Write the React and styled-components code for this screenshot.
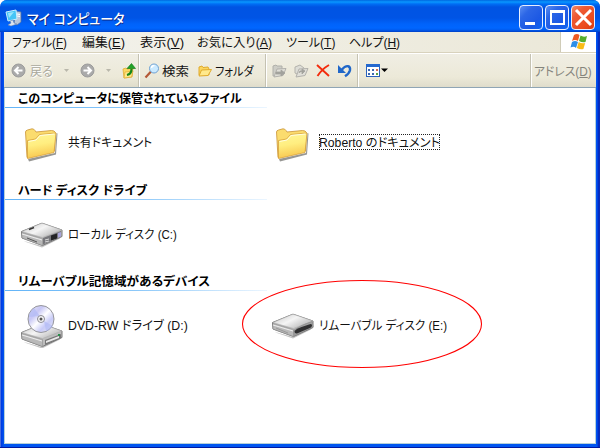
import React, { useLayoutEffect, useRef, useState } from "react";
import styled, { createGlobalStyle } from "styled-components";

const GlobalStyle = createGlobalStyle`
  * { box-sizing: border-box; }
  body { margin: 0; background: #fff; overflow: hidden; }
  svg { display: block; flex: none; }
`;

const Window = styled.div`
  width: 600px;
  height: 448px;
  display: flex;
  flex-direction: column;
  background: linear-gradient(90deg, #4a6fe0 0, #4a6fe0 1px, #0038e0 1px, #0055f0 4px, #0055f0 596px, #0050f0 597px, #0020b8 599px, #1838b0 600px);
  border-bottom: 1px solid #0018a0;
  border-radius: 7px 7px 0 0;
  padding: 0 4px 3px;
  font-family: "Liberation Sans", "Noto Sans CJK JP", sans-serif;
  font-size: 12px;
  color: #111;
`;

const TitleBar = styled.header`
  height: 32px;
  margin: 0 -4px;
  padding: 3px 5px 0;
  display: flex;
  align-items: center;
  border-radius: 7px 7px 0 0;
  background: linear-gradient(180deg, #0067e0 0, #0997ff 2px, #006ef4 4px, #0054e3 7px, #0054e5 18px, #0063fb 24px, #0066ff 28px, #005bef 30px, #003fc4 32px);
`;

const TitleText = styled.h1`
  flex: 1;
  margin: 0 0 0 4px;
  font-size: 14px;
  font-weight: 500;
  line-height: 24px;
  color: #fff;
  text-shadow: 1px 1px 0 #0a2a8a;
`;

const Controls = styled.div`
  display: flex;
  gap: 2px;
`;

const Control = styled.button`
  width: 24px;
  height: 25px;
  padding: 0;
  border: 1px solid #e8efff;
  border-radius: 4px;
  display: grid;
  place-items: center;
  background: ${(p) =>
    p.$close
      ? "linear-gradient(135deg, #f08a68 0, #ee5a34 30%, #ec4c20 70%, #d83c10 100%)"
      : "linear-gradient(135deg, #5a8ef2 0, #2c66e6 30%, #1c58e4 70%, #0c66f4 100%)"};
`;

const MenuBar = styled.nav`
  height: 21px;
  display: flex;
  background: linear-gradient(90deg, #f3f2ec, #ebe8d8);
  border-bottom: 1px solid #d8d2bd;
`;

const Menus = styled.div`
  flex: 1;
  display: flex;
  align-items: center;
  padding-left: 8px;
  border-right: 1px solid #d0ccb8;
`;

const MenuItem = styled.div`
  margin-right: ${(p) => p.$after}px;
  line-height: 18px;
`;

const Brand = styled.div`
  width: 35px;
  display: grid;
  place-items: center;
  background: #fff;
`;

const ToolBar = styled.div`
  height: 35px;
  display: flex;
  border-top: 1px solid #fff;
  border-bottom: 1px solid #8fa5b5;
  background: linear-gradient(180deg, #f0eee4, #ece9d8 70%, #dfdccb);
`;

const ToolGroup = styled.div`
  width: ${(p) => p.$width}px;
  display: flex;
  align-items: center;
  padding-left: ${(p) => p.$left}px;
  gap: ${(p) => p.$gap}px;
  border-right: ${(p) => (p.$last ? "0" : "1px solid #c5c2b2")};
  box-shadow: ${(p) => (p.$last ? "none" : "1px 0 #fff")};
  line-height: 18px;
  color: ${(p) => (p.$muted ? "#85857d" : "inherit")};
`;

const Tool = styled.div`
  display: flex;
  align-items: center;
  gap: ${(p) => p.$gap || 4}px;
  color: ${(p) => (p.$disabled ? "#aaa99f" : "inherit")};
  text-shadow: ${(p) => (p.$disabled ? "1px 1px #fff" : "none")};
`;

const Content = styled.main`
  flex: 1;
  background: #fff;
  border: 1px solid #b4d0d8;
  border-top: 0;
`;

const Section = styled.section`
  height: ${(p) => p.$height}px;
`;

const SectionTitle = styled.h2`
  height: ${(p) => p.$height}px;
  width: 262px;
  margin: 0;
  padding: 0 0 0 13px;
  display: flex;
  align-items: flex-end;
  font-size: 12px;
  font-weight: 700;
  line-height: 17px;
  color: #000;
  border-bottom: 1px solid;
  border-image: linear-gradient(90deg, #62b4f8, #8cc8f9 50%, #ecf6ff) 1;
`;

const Items = styled.div`
  display: grid;
  grid-template-columns: 251px 251px;
  padding: ${(p) => p.$top}px 0 0 15px;
`;

const Item = styled.div`
  display: flex;
  align-items: center;
  gap: 4px;
  height: 44px;
`;

const ItemName = styled.div`
  height: 16px;
  margin-bottom: ${(p) => p.$lift}px;
  display: flex;
  align-items: center;
  line-height: 18px;
  outline: ${(p) => (p.$focused ? "1px dotted #222" : "0")};
  outline-offset: -1px;
`;

const FitBox = styled.span`
  display: inline-block;
  width: ${(p) => p.$width}px;
  white-space: pre;
  vertical-align: top;
`;

const FitInner = styled.span`
  display: inline-block;
  transform-origin: 0 50%;
  font-feature-settings: "palt";
`;

const Mnemonic = styled.span`
  text-decoration: underline;
  text-underline-offset: 1px;
  text-decoration-thickness: 1px;
`;

const HighlightRing = styled.svg`
  position: absolute;
  left: 241px;
  top: 279px;
  pointer-events: none;
`;

function Fit({ width, children }) {
  const ref = useRef(null);
  const [scale, setScale] = useState(1);
  useLayoutEffect(() => {
    setScale(width / ref.current.offsetWidth);
  }, [width]);
  return (
    <FitBox $width={width}>
      <FitInner ref={ref} style={{ transform: `translateY(1px) scaleX(${scale})` }}>{children}</FitInner>
    </FitBox>
  );
}

const ComputerIcon = () => (
  <svg width="18" height="18" viewBox="0 0 18 18">
    <path d="M11 2l5 1v10l-4 3-3-2z" fill="#b9c7dc" stroke="#53719e" strokeWidth=".7" />
    <path d="M12 5l3 .5M12 7l3 .5" stroke="#fff" />
    <path d="M1 3l10-2 1 9-9 2z" fill="#45c5f6" stroke="#c9efff" />
    <path d="M3 4l6-1-5 6z" fill="#9ce6ff" />
    <path d="M5 12l3-1 1 3 3 1-6 2-3-1 3-2z" fill="#dce3ef" stroke="#6a82a8" strokeWidth=".5" />
  </svg>
);

const Flag = () => (
  <svg width="18" height="18" viewBox="0 0 18 18">
    <path d="M4 2q3-2 5.500 0L8 8q-3-2-6 0z" fill="#ee5a24" />
    <path d="M10.500 2.500q3 2 6.500 .5L15.500 9q-3 1-6.500-1z" fill="#55ae2d" />
    <path d="M2 9q3-2 6 0l-2 6q-2-2-5.500-.5z" fill="#2e8ee6" />
    <path d="M8.700 9q3 2 6.500 1l-1.800 6q-3 1-6.500-1z" fill="#f9bb16" />
  </svg>
);

const RoundArrow = ({ forward }) => (
  <svg width="15" height="15" viewBox="0 0 15 15">
    <circle cx="7.500" cy="7.500" r="6.500" fill="#aaa" stroke="#9b9b9b" />
    <path d={forward ? "M3.500 7.500h7M7.500 4l3.500 3.500L7.500 11" : "M11.500 7.500h-7M7.500 4L4 7.500 7.500 11"} fill="none" stroke="#fff" strokeWidth="2" />
  </svg>
);

const Caret = ({ dark }) => (
  <svg width="7" height="5" viewBox="0 0 7 5">
    <path d={dark ? "M0 .5h7L3.500 4z" : "M1 1h5L3.500 4z"} fill={dark ? "#000" : "#b9b7ab"} />
  </svg>
);

const UpFolder = () => (
  <svg width="14" height="16" viewBox="0 0 14 16">
    <path d="M1 6l3-1 1 1 6-1-1 9-8 1z" fill="#fbd862" stroke="#e0ac35" strokeWidth=".8" />
    <path d="M2 15l1-6 8-1-1.500 6z" fill="#ffe88c" stroke="#e0ac35" strokeWidth=".7" />
    <path d="M5 12q4.500-1 4.500-6" fill="none" stroke="#168617" strokeWidth="2.200" />
    <path d="M5 5.500L9.500 .5l4 5z" fill="#21a32a" stroke="#0b7714" strokeWidth=".6" />
  </svg>
);

const Magnifier = () => (
  <svg width="16" height="16" viewBox="0 0 16 16">
    <path d="M1.500 14.500L7 8.500" stroke="#b45937" strokeWidth="2.200" />
    <circle cx="10" cy="5.500" r="4.500" fill="#cbeaff" stroke="#6fa1d2" />
    <path d="M7.500 5q0-2.500 3-2.500" fill="none" stroke="#fff" strokeWidth="1.500" />
  </svg>
);

const OpenFolder = () => (
  <svg width="14" height="14" viewBox="0 0 14 14">
    <path d="M1 11V3l3-1 1 1.500 5-.5 1 2v6z" fill="#fbd65f" stroke="#e0aa2c" />
    <path d="M1 12l2.500-6 10-.5-3.500 6z" fill="#ffe98c" stroke="#e0aa2c" />
  </svg>
);

const SendTo = ({ copy }) => (
  <svg width="15" height="14" viewBox="0 0 15 14">
    {copy ? (
      <path d="M1 3l5-2 4 3v4l-5 3-4-2z" fill="#ddddd6" stroke="#b4b3ad" />
    ) : (
      <path d="M1 12V2l3-1 1 1h5v9z" fill="#cdcdc6" stroke="#b0b0aa" />
    )}
    <path d="M2 13l3-8 9-.5-3 7z" fill="#e0dfd8" stroke="#b2b1ac" />
    <path d={copy ? "M5 9q0-3 4-2M8 5l3 2-3 3z" : "M4 8h5V6l4 3-4 3v-2H4z"} fill="#a2a29d" stroke="#a2a29d" strokeWidth=".8" />
  </svg>
);

const DeleteIcon = () => (
  <svg width="14" height="13" viewBox="0 0 14 13">
    <path d="M1 1l12 11M13 1Q6 5 1.500 12" fill="none" stroke="#f32c0c" strokeWidth="1.900" />
  </svg>
);

const UndoIcon = () => (
  <svg width="15" height="14" viewBox="0 0 15 14">
    <path d="M4.500 6Q8 1.800 11 2.200q2.500 .5 2 4Q12.300 9.500 8 12.300" fill="none" stroke="#2067c9" strokeWidth="2.400" />
    <path d="M1 1v8h8z" fill="#2067c9" />
  </svg>
);

const ViewsIcon = () => (
  <svg width="14" height="13" viewBox="0 0 14 13">
    <rect x=".5" y=".5" width="13" height="12" fill="#fff" stroke="#2a62bb" />
    <path d="M0 0h14v3H0z" fill="#2569cf" />
    <g fill="#3b68b0">
      <path d="M2 5h2v2H2zM6 5h2v2H6zM2 9h2v2H2zM6 9h2v2H6z" />
    </g>
    <path d="M10 5h2v2h-2z" fill="#d76c4f" />
    <path d="M10 9h2v2h-2z" fill="#59a346" />
  </svg>
);

const FolderIcon = () => (
  <svg width="44" height="44" viewBox="0 0 44 44">
    <defs>
      <linearGradient id="folderFace" x1="0" y1="0" x2=".2" y2="1">
        <stop offset="0" stopColor="#fff79a" />
        <stop offset=".5" stopColor="#ffee80" />
        <stop offset="1" stopColor="#f8c850" />
      </linearGradient>
    </defs>
    <path d="M8 37l27-6 1.500-20 1 .5-1.500 21-27 7z" fill="#8c8c88" opacity=".9" />
    <path d="M5.500 10q0-1.500 2-2l4.500-1.200q2 0 3 1.700l1 1.500 15.500-1.500q3 0 4 2l-1 18.500L7 35.500z" fill="#fbdc6e" stroke="#c99335" strokeWidth=".8" />
    <path d="M7.500 18.500l8-1.500 4-4.500 16.500-1.500-2 19.500L7.500 36.500z" fill="url(#folderFace)" stroke="#d7a13c" strokeWidth=".8" />
    <path d="M8.500 19.500l7.500-1.500 4-4.500 14.500-1.500" fill="none" stroke="#fffde0" />
  </svg>
);

const driveTop = (
  <>
    <path d="M4 19l18 5 18-10v2.500L22 25.500 6 20z" fill="#888" opacity=".5" />
    <path d="M1.500 9.500L21 1.500q1-.5 2 0L42 8v6.500L22.500 23.500 2 16z" fill="#bdbdbd" stroke="#777" />
    <path d="M2 9.500L21 1.500q1-.5 2 0L42 8 22.500 15.500z" fill="url(#metal)" stroke="#aaa" strokeWidth=".5" />
    <path d="M2 10.500L22.500 16.500v7L2 16z" fill="#b9b9b9" stroke="#888" strokeWidth=".5" />
    <path d="M2 12l20 6" stroke="#eee" />
  </>
);

const Metal = () => (
  <linearGradient id="metal" x1="0" y1="0" x2="1" y2=".7">
    <stop offset="0" stopColor="#c4c4c4" />
    <stop offset=".5" stopColor="#f5f5f5" />
    <stop offset="1" stopColor="#b4b4b4" />
  </linearGradient>
);

const HardDiskIcon = () => (
  <svg width="44" height="26" viewBox="0 0 44 26">
    <defs><Metal /></defs>
    {driveTop}
    <path d="M23 16l18-7v5.500L23 22.500z" fill="#77777b" />
    <path d="M31 13.500l6-2v5l-6 2z" fill="#242426" />
    <path d="M38 11l3-1v4.500l-3 1.300z" fill="#a9a6dc" />
    <path d="M9 7.500l5-2" stroke="#333" strokeWidth="1.500" />
    <path d="M7 16l10 4" stroke="#555" />
    <path d="M25 18l4-1M25 20l4-1" stroke="#ddd" />
  </svg>
);

const DvdIcon = () => (
  <svg width="44" height="44" viewBox="0 0 44 44">
    <defs>
      <Metal />
      <linearGradient id="disc" x1="0" y1="0" x2="1" y2="1">
        <stop offset="0" stopColor="#e9e7f2" />
        <stop offset=".3" stopColor="#c7c7f5" />
        <stop offset=".5" stopColor="#fff" />
        <stop offset=".7" stopColor="#c8cbf8" />
        <stop offset="1" stopColor="#ececf4" />
      </linearGradient>
    </defs>
    <g transform="translate(0 19)">
      {driveTop}
      <path d="M25 17l16-6v4l-16 7z" fill="#777" />
      <path d="M26 18l13-5v2l-13 5z" fill="#e8e8e8" />
      <path d="M38 11h2v2h-2z" fill="#298d49" />
    </g>
    <ellipse cx="21" cy="15" rx="13" ry="13.500" fill="url(#disc)" stroke="#96969b" />
    <path d="M20 12L14 4q-5 4-5 9zM24 17l9 5q-3 5-7 5z" fill="#aeb7f5" opacity=".6" />
    <circle cx="21" cy="15" r="3.500" fill="#f6f6f8" stroke="#8b8b92" />
    <circle cx="21" cy="15" r="1.500" fill="#555" />
  </svg>
);

const RemovableIcon = () => (
  <svg width="44" height="26" viewBox="0 0 44 26">
    <defs><Metal /></defs>
    {driveTop}
    <path d="M23 17q7-5 18-8.500l1 5.500-19 9z" fill="#a2a2a2" stroke="#888" strokeWidth=".6" />
    <path d="M23.500 18q2-2.500 7-4l9-3q2 0 1.500 2l-1 1.500-14 6q-2.500 .5-2.500-2.500z" fill="#303031" />
    <path d="M5 15l12 5" stroke="#999" />
  </svg>
);

const menuItems = [
  ["ファイル", "F", 55, 15], ["編集", "E", 43, 15], ["表示", "V", 44, 13],
  ["お気に入り", "A", 75, 14], ["ツール", "T", 49, 14], ["ヘルプ", "H", 51, 0],
];

const sections = [
  { title: "このコンピュータに保管されているファイル", width: 224, titleHeight: 20, height: 91, top: 14, lift: 4,
    items: [{ name: "共有ドキュメント", width: 84, Icon: FolderIcon }, { name: "Roberto のドキュメント", width: 121, Icon: FolderIcon, focused: true }] },
  { title: "ハード ディスク ドライブ", width: 129, titleHeight: 21, height: 92, top: 13, lift: 3,
    items: [{ name: "ローカル ディスク (C:)", width: 109, Icon: HardDiskIcon }] },
  { title: "リムーバブル記憶域があるデバイス", width: 192, titleHeight: 20, height: 90, top: 13, lift: 3,
    items: [{ name: "DVD-RW ドライブ (D:)", width: 120, Icon: DvdIcon }, { name: "リムーバブル ディスク (E:)", width: 128, Icon: RemovableIcon }] },
];

export default function App() {
  return (
    <>
      <GlobalStyle />
      <Window>
        <TitleBar>
          <ComputerIcon />
          <TitleText><Fit width={97}>マイ コンピュータ</Fit></TitleText>
          <Controls>
            <Control aria-label="最小化"><svg width="19" height="19"><path d="M3 14h10v3H3z" fill="#fff" /></svg></Control>
            <Control aria-label="最大化"><svg width="19" height="19"><path d="M2 3.500h15" stroke="#fff" strokeWidth="3" /><path d="M3 4v12h13V4" fill="none" stroke="#fff" strokeWidth="2" /></svg></Control>
            <Control $close aria-label="閉じる"><svg width="19" height="19"><path d="M2 2l15 15M17 2L2 17" stroke="#fff" strokeWidth="3" /></svg></Control>
          </Controls>
        </TitleBar>
        <MenuBar>
          <Menus>
            {menuItems.map(([label, key, width, after]) => (
              <MenuItem key={key} $after={after}><Fit width={width}>{label}(<Mnemonic>{key}</Mnemonic>)</Fit></MenuItem>
            ))}
          </Menus>
          <Brand><Flag /></Brand>
        </MenuBar>
        <ToolBar>
          <ToolGroup $width={135} $left={7} $gap={10}>
            <Tool $disabled><RoundArrow /><Fit width={23}>戻る</Fit></Tool>
            <Caret />
            <RoundArrow forward />
            <Caret />
            <UpFolder />
          </ToolGroup>
          <ToolGroup $width={127} $left={5} $gap={9}>
            <Tool $gap={2}><Magnifier /><Fit width={27}>検索</Fit></Tool>
            <Tool $gap={3}><OpenFolder /><Fit width={39}>フォルダ</Fit></Tool>
          </ToolGroup>
          <ToolGroup $width={92} $left={6} $gap={7}>
            <SendTo /><SendTo copy /><DeleteIcon /><UndoIcon />
          </ToolGroup>
          <ToolGroup $width={173} $left={8} $gap={1}>
            <ViewsIcon /><Caret dark />
          </ToolGroup>
          <ToolGroup $width={65} $left={3} $gap={0} $last $muted>
            <Fit width={58}>アドレス(<Mnemonic>D</Mnemonic>)</Fit>
          </ToolGroup>
        </ToolBar>
        <Content>
          {sections.map((s) => (
            <Section key={s.title} $height={s.height}>
              <SectionTitle $height={s.titleHeight}><Fit width={s.width}>{s.title}</Fit></SectionTitle>
              <Items $top={s.top}>
                {s.items.map(({ name, width, Icon, focused }) => (
                  <Item key={name}>
                    <Icon />
                    <ItemName $focused={focused} $lift={s.lift}><Fit width={width}>{name}</Fit></ItemName>
                  </Item>
                ))}
              </Items>
            </Section>
          ))}
        </Content>
      </Window>
      <HighlightRing width="242" height="90" viewBox="0 0 242 90">
        <ellipse cx="121" cy="45" rx="119.500" ry="43.500" fill="none" stroke="#f00" strokeWidth="1.100" />
      </HighlightRing>
    </>
  );
}
